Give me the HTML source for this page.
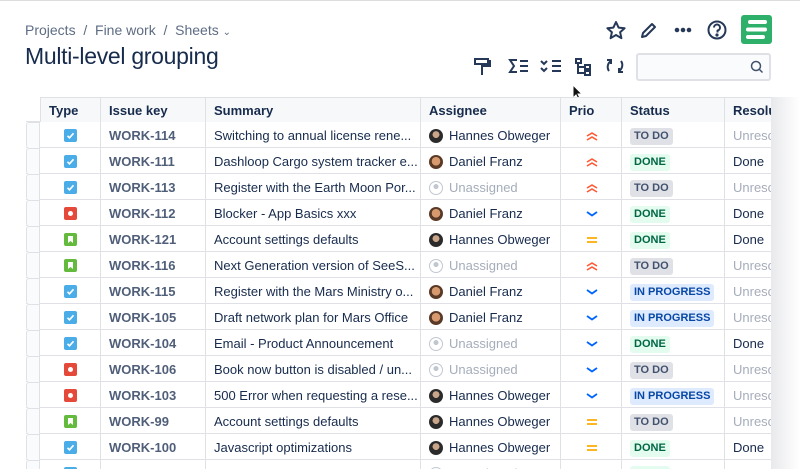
<!DOCTYPE html><html><head><style>
*{box-sizing:border-box;margin:0;padding:0}
body{width:800px;height:469px;overflow:hidden;background:#fff;font-family:"Liberation Sans",sans-serif;color:#172b4d;position:relative}
.bc{position:absolute;left:25px;top:22px;font-size:14px;color:#5e6c84}
h1{position:absolute;left:25px;top:43px;font-size:23px;color:#172b4d;letter-spacing:-0.3px;font-weight:500}
.ic{position:absolute}
.tbl{position:absolute;left:26px;top:97px;width:745px;height:372px;overflow:hidden}
.row{position:absolute;left:0;height:26px;width:800px;border-bottom:1px solid #dfe1e6}
.c{position:absolute;top:0;height:26px;line-height:28px;font-size:13px;white-space:nowrap;overflow:hidden;border-right:1px solid #dfe1e6;padding-left:8px}
.hd .c{font-weight:bold;background:#f7f8f9;height:25px;line-height:26px}
.key{color:#505f79;font-weight:bold}
.lz{color:#a5adba}
.st{display:inline-block;font-size:11px;font-weight:bold;line-height:17px;padding:0 4px;border-radius:3px;vertical-align:middle}
.todo{background:#dfe1e6;color:#42526e}.done{background:#e3fcef;color:#006644}.ip{background:#deebff;color:#0747a6}
.av{display:inline-block;width:14px;height:14px;border-radius:50%;vertical-align:-3px;margin-right:6px}
.ty{display:inline-block;width:13px;height:13px;border-radius:2px;margin-left:16px;vertical-align:-2px;position:relative}
.fade{position:absolute;left:771px;top:97px;width:29px;height:372px;background:linear-gradient(90deg,#e8e9ec,#fff)}
</style></head><body>
<div style="position:absolute;left:0;top:0;width:800px;height:1px;background:#ddd"></div>
<div class="bc">Projects &nbsp;/ &nbsp;Fine work &nbsp;/ &nbsp;Sheets <span style="font-size:10px">&#8964;</span></div>
<h1>Multi-level grouping</h1>
<svg class="ic" style="left:606px;top:20px" width="170" height="26" fill="none" stroke="#253858" stroke-width="2" stroke-linejoin="round">
<path d="M10 2l2.6 5.6 6 .6-4.5 4 1.3 6L10 15l-5.4 3.2 1.3-6L1.4 8.2l6-.6z"/>
<path d="M36 17l1-4 9-9 3 3-9 9z"/>
<circle cx="71" cy="10" r="1.3" fill="#253858"/><circle cx="77" cy="10" r="1.3" fill="#253858"/><circle cx="83" cy="10" r="1.3" fill="#253858"/>
<circle cx="111" cy="10" r="8.5"/><path d="M108 7.5a3 3 0 1 1 3.5 3v2"/><circle cx="111" cy="15" r=".6" fill="#253858"/>
</svg>
<div style="position:absolute;left:741px;top:15px;width:31px;height:29px;background:#2eb06a;border-radius:3px"></div>
<svg class="ic" style="left:741px;top:15px" width="31" height="29"><path d="M9 7h15M7 14.5h17M7 22h15" stroke="#fff" stroke-width="4" stroke-linecap="round"/></svg>
<svg class="ic" style="left:470px;top:55px" width="160" height="24" fill="none" stroke="#253858" stroke-width="2">
<path d="M5 4h13v5H5zM18 6h2v5h-8v3M12 14v6"/>
<path d="M47 5h-7l4 6-4 6h7M50 6h8M50 11h8M50 16h8"/>
<path d="M71 6l3 3 3-3M71 13l3 3 3-3M82 6h9M82 11h9M82 16h9"/>
<path d="M106 4h5v4h-5zM108 8v10h7M108 12h7M115 10h5v4h-5zM115 16h5v4h-5z"/>
<path d="M141 6a7 7 0 0 0-2 10M149 16a7 7 0 0 0 2-10M137 5h4v4M153 17h-4v-4"/>
</svg>
<div style="position:absolute;left:636px;top:53px;width:135px;height:28px;border:2px solid #dfe1e6;border-radius:3px;background:#fafbfc"></div>
<svg class="ic" style="left:750px;top:60px" width="14" height="14" fill="none" stroke="#42526e" stroke-width="1.5"><circle cx="6" cy="6" r="4.5"/><path d="M9.5 9.5l3 3"/></svg>
<svg class="ic" style="left:572px;top:84px" width="12" height="18"><path d="M1 1v13l3-3 2.5 5 2-1-2.5-5h4z" fill="#111" stroke="#fff"/></svg>
<div class="tbl" id="t"></div>
<div class="fade"></div>
<script>
const cols=[[0,14],[14,61],[75,105],[180,215],[395,140],[535,61],[596,103],[699,120]];
const data=[
["c","WORK-114","Switching to annual license rene...","H","hh","todo","Unresolved"],
["c","WORK-111","Dashloop Cargo system tracker e...","D","hh","done","Done"],
["c","WORK-113","Register with the Earth Moon Por...","U","hh","todo","Unresolved"],
["b","WORK-112","Blocker - App Basics xxx","D","lo","done","Done"],
["s","WORK-121","Account settings defaults","H","md","done","Done"],
["s","WORK-116","Next Generation version of SeeS...","U","hh","todo","Unresolved"],
["c","WORK-115","Register with the Mars Ministry o...","D","lo","ip","Unresolved"],
["c","WORK-105","Draft network plan for Mars Office","D","lo","ip","Unresolved"],
["c","WORK-104","Email - Product Announcement","U","lo","done","Done"],
["b","WORK-106","Book now button is disabled / un...","U","lo","todo","Unresolved"],
["b","WORK-103","500 Error when requesting a rese...","H","lo","ip","Unresolved"],
["s","WORK-99","Account settings defaults","H","md","todo","Unresolved"],
["c","WORK-100","Javascript optimizations","H","md","done","Done"],
["c","","","U","lo","done",""]];
let h='<div class="row hd" style="top:0;height:25px">';
const hn=["","Type","Issue key","Summary","Assignee","Prio","Status","Resolution"];
cols.forEach((c,i)=>{if(i>0)h+=`<div class="c" style="left:${c[0]}px;width:${c[1]}px;border-top:1px solid #dfe1e6;${i==1?'border-left:1px solid #dfe1e6;':''}">${hn[i]}</div>`});
h+='</div>';
const ty={c:['#4bade8','<svg width="13" height="13" style="position:absolute;left:0;top:0"><path d="M3.5 6.8l2 2 4-4.5" stroke="#fff" stroke-width="1.6" fill="none"/></svg>'],
b:['#e5493a','<span style="position:absolute;left:4px;top:4px;width:5px;height:5px;border-radius:50%;background:#fff"></span>'],
s:['#63ba3c','<svg width="13" height="13" style="position:absolute;left:0;top:0"><path d="M4 3h5v7l-2.5-2L4 10z" fill="#fff"/></svg>']};
const pr={hh:'<svg width="12" height="10" style="vertical-align:-1px"><path d="M1 5l5-3 5 3M1 9l5-3 5 3" stroke="#ff5630" stroke-width="1.6" fill="none"/></svg>',
lo:'<svg width="12" height="8" style="vertical-align:0"><path d="M1 2l5 3.5L11 2" stroke="#0065ff" stroke-width="1.8" fill="none"/></svg>',
md:'<svg width="12" height="8" style="vertical-align:0"><path d="M1 2h10M1 6h10" stroke="#ffab00" stroke-width="1.8"/></svg>'};
const sn={todo:"TO DO",done:"DONE",ip:"IN PROGRESS"};
data.forEach((r,k)=>{
let y=25+k*26;h+=`<div class="row" style="top:${y}px">`;
const av=r[3]=="H"?'<span class="av" style="background:radial-gradient(circle at 50% 40%,#c9a58a 30%,#2b2b2b 32%)"></span>Hannes Obweger':r[3]=="D"?'<span class="av" style="background:radial-gradient(circle at 50% 45%,#d79a6e 40%,#5a3a26 42%)"></span>Daniel Franz':'<span class="lz"><span class="av" style="border:1.5px solid #c1c7d0;background:radial-gradient(circle at 50% 38%,#c1c7d0 25%,#fff 27%)"></span>Unassigned</span>';
const cells=["",`<span class="ty" style="background:${ty[r[0]][0]}">${ty[r[0]][1]}</span>`,`<span class="key">${r[1]}</span>`,r[2],av,`<span style="padding-left:17px">${pr[r[4]]}</span>`,`<span class="st ${r[5]}">${sn[r[5]]}</span>`,r[6]=="Done"?"Done":`<span class="lz">${r[6]}</span>`];
cols.forEach((c,i)=>{h+=`<div class="c" style="left:${c[0]}px;width:${c[1]}px;${i==0?'border-left:1px solid #dfe1e6;border-top:1px solid #dfe1e6;border-radius:3px 0 0 3px;background:#fafbfc;':''}">${cells[i]}</div>`});
h+='</div>'});
document.getElementById('t').innerHTML=h;
</script>
</body></html>
